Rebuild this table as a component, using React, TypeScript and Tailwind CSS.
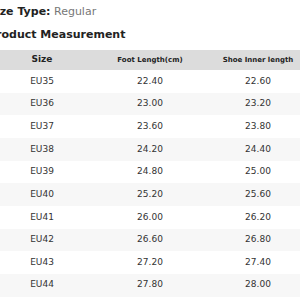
import React from "react";

const rows: [string, string, string][] = [
  ["EU35", "22.40", "22.60"],
  ["EU36", "23.00", "23.20"],
  ["EU37", "23.60", "23.80"],
  ["EU38", "24.20", "24.40"],
  ["EU39", "24.80", "25.00"],
  ["EU40", "25.20", "25.60"],
  ["EU41", "26.00", "26.20"],
  ["EU42", "26.60", "26.80"],
  ["EU43", "27.20", "27.40"],
  ["EU44", "27.80", "28.00"],
];

export default function App() {
  return (
    <div className="w-[300px] h-[300px] overflow-hidden bg-white" style={{ fontFamily: '"DejaVu Sans", sans-serif' }}>
      <div className="ml-[-12px] w-[324px] pt-[5px]">
        <p className="text-[11px] leading-[13px] text-[#222]">
          <span className="font-bold">Size Type:</span>{" "}
          <span className="text-[#777]">Regular</span>
        </p>
        <p className="mt-[9.5px] text-[11px] leading-[13px] font-bold text-[#222]">Product Measurement</p>
        <div className="mt-[9.5px]">
          <div className="grid grid-cols-3 h-[20px] items-center bg-[#dcdcdc] text-[#222] font-bold text-center">
            <div className="text-[9px]">Size</div>
            <div className="text-[7px]">Foot Length(cm)</div>
            <div className="text-[7px]">Shoe Inner length</div>
          </div>
          {rows.map((r, i) => (
            <div
              key={r[0]}
              className={`grid grid-cols-3 h-[22.67px] items-center text-center text-[9px] text-[#333] ${i % 2 === 1 ? "bg-[#f7f7f7]" : "bg-white"}`}
            >
              <div>{r[0]}</div>
              <div>{r[1]}</div>
              <div>{r[2]}</div>
            </div>
          ))}
        </div>
      </div>
    </div>
  );
}
